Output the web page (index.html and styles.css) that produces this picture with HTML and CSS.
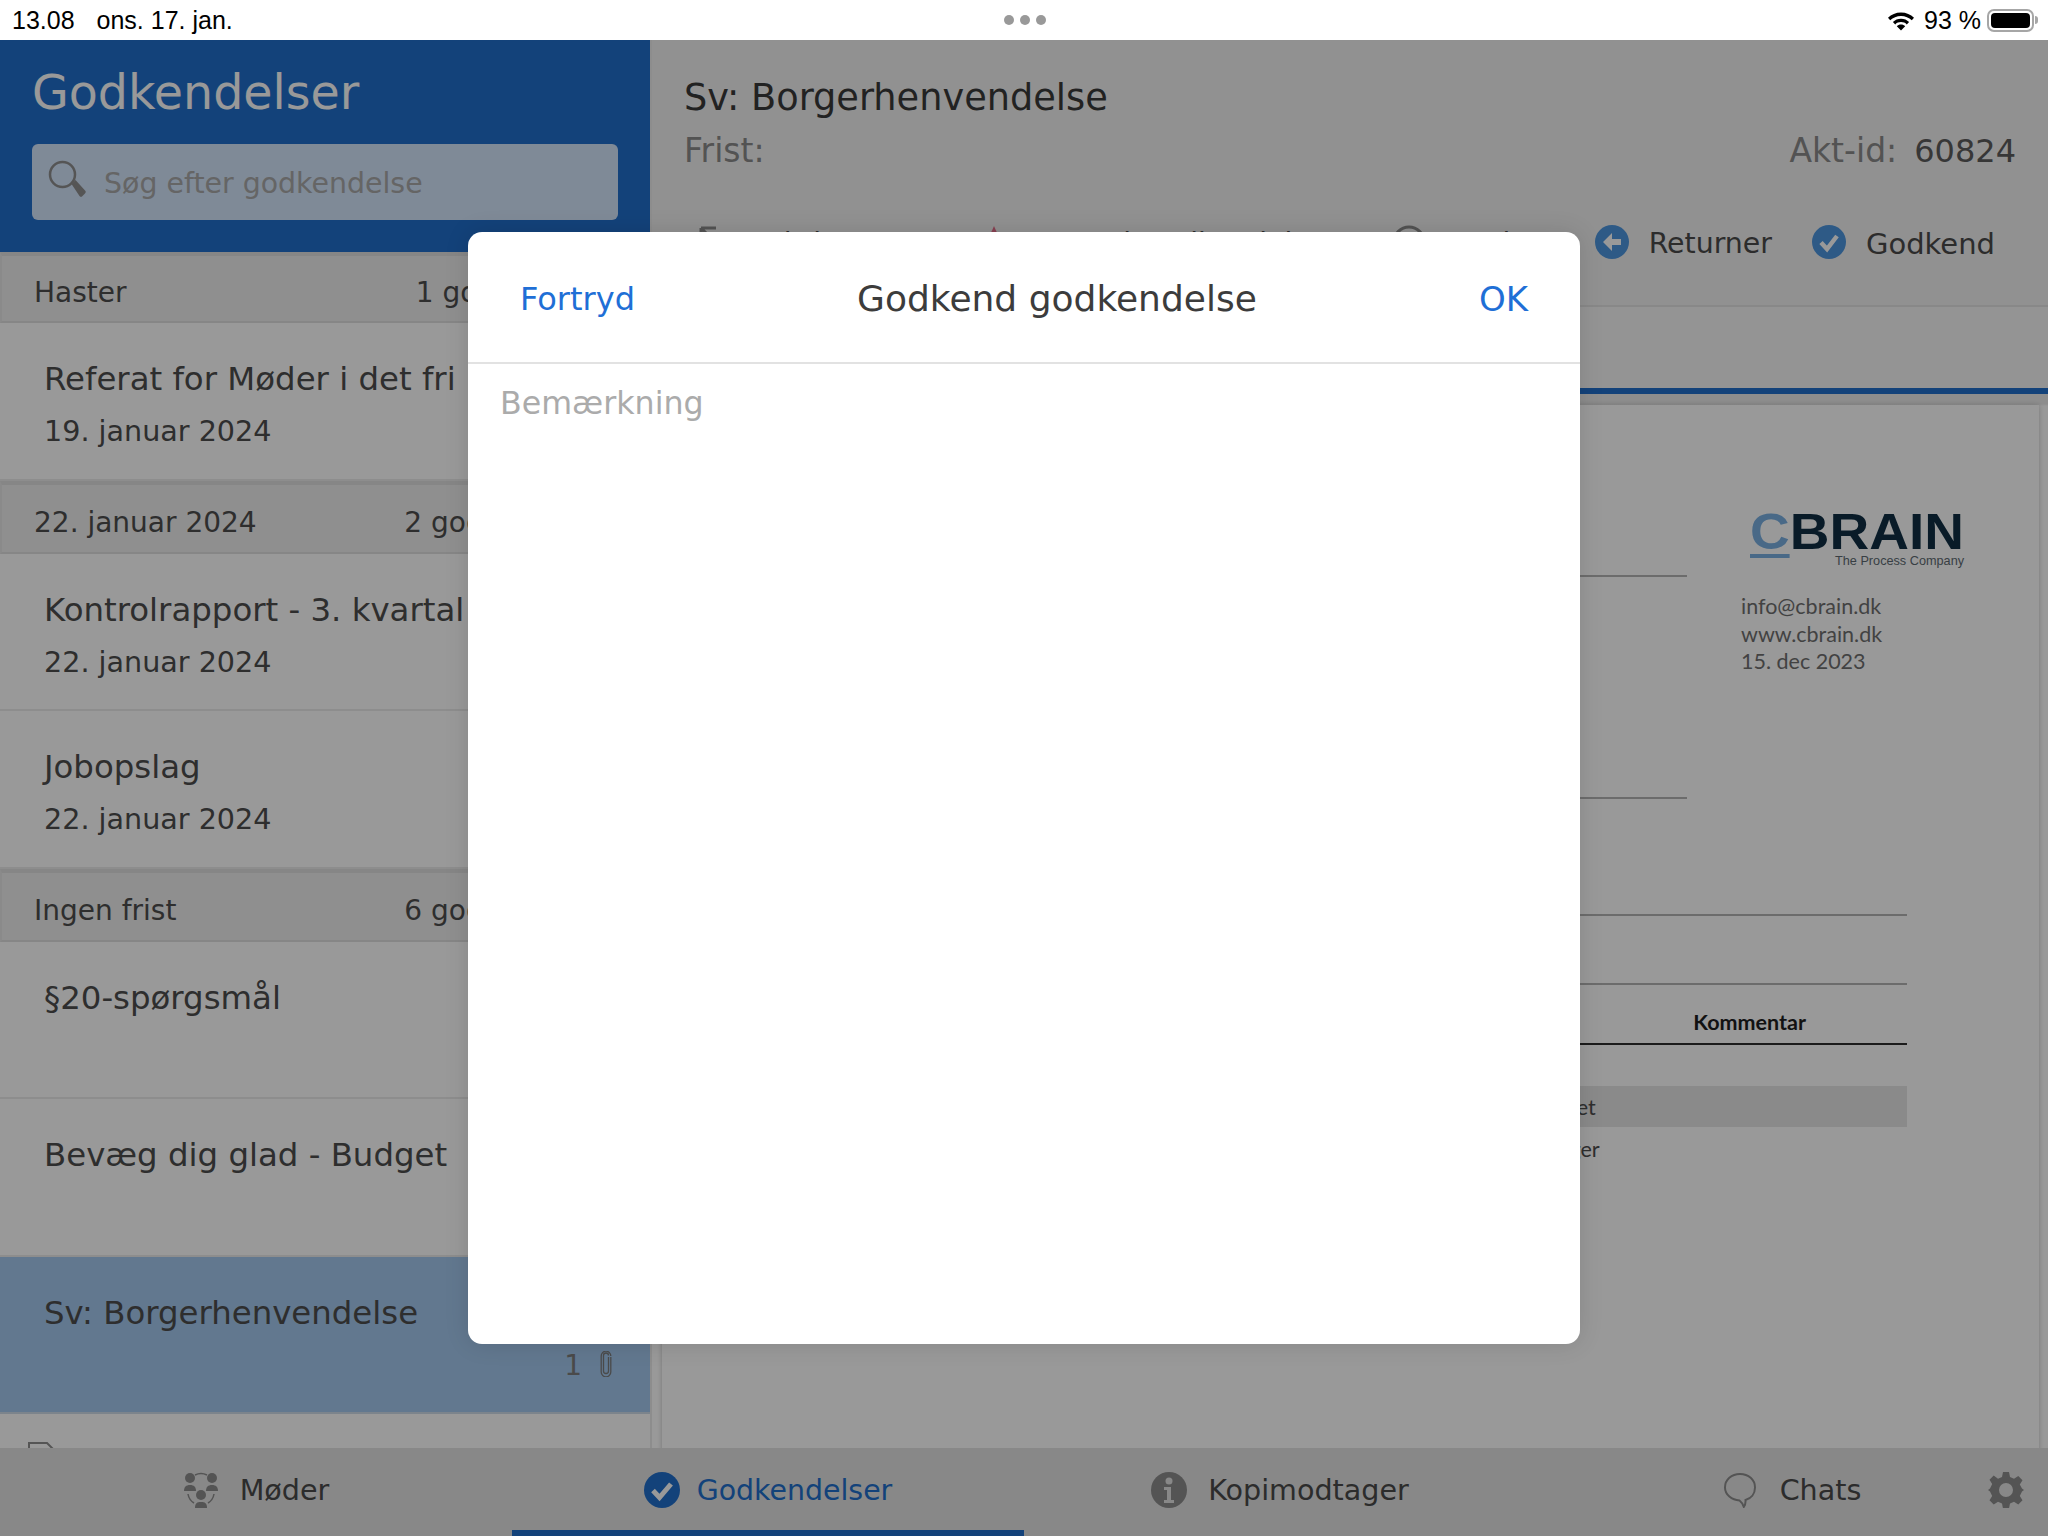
FILE: index.html
```html
<!DOCTYPE html>
<html lang="da">
<head>
<meta charset="utf-8">
<title>Godkendelser</title>
<link rel="stylesheet" href="styles.css">
</head>
<body>
<div class="app">
  <div class="status">
    <div class="status-left"><span>13.08</span><span>ons. 17. jan.</span></div>
    <div class="dots"><i></i><i></i><i></i></div>
    <div class="status-right">
      <svg class="wifi" viewBox="0 0 28 22"><path d="M14 3.500c5.200 0 9.700 2 13 5.300l-2.200 2.400C22 8.500 18.200 6.900 14 6.900S6 8.500 3.200 11.200L1 8.800C4.300 5.500 8.800 3.500 14 3.500z"/><path d="M14 9.700c3.200 0 6 1.200 8.100 3.300l-2.300 2.400c-1.500-1.500-3.500-2.300-5.800-2.300s-4.300.8-5.800 2.300L5.900 13c2.100-2.100 4.900-3.300 8.100-3.300z"/><path d="M14 15.500c1.700 0 3.100.6 4.200 1.700L14 21.500l-4.200-4.300c1.100-1.100 2.500-1.700 4.200-1.700z"/></svg>
      <span>93 %</span>
      <div class="battery"><b></b></div><div class="battery-tip"></div>
    </div>
  </div>
  <div class="main">
    <aside class="left">
      <header class="left-head">
        <h1>Godkendelser</h1>
        <div class="search">
          <svg class="search-icon" viewBox="0 0 38 38"><circle cx="14.500" cy="14.500" r="12.500" fill="none" stroke="currentColor" stroke-width="2.500"/><path d="M23.500 24l4-4 10 11a2.500 2.500 0 0 1-1 3l-2 2a2 2 0 0 1-3 0z" fill="currentColor"/></svg>
          <span>Søg efter godkendelse</span>
        </div>
      </header>
      <div class="list">
        <div class="section"><span>Haster</span><span>1 godkendelse</span></div>
        <div class="item"><div class="item-title">Referat for Møder i det fri</div><div class="item-date">19. januar 2024</div></div>
        <div class="section"><span>22. januar 2024</span><span>2 godkendelser</span></div>
        <div class="item"><div class="item-title">Kontrolrapport - 3. kvartal</div><div class="item-date">22. januar 2024</div></div>
        <div class="item"><div class="item-title">Jobopslag</div><div class="item-date">22. januar 2024</div></div>
        <div class="section"><span>Ingen frist</span><span>6 godkendelser</span></div>
        <div class="item"><div class="item-title">§20-spørgsmål</div></div>
        <div class="item"><div class="item-title">Bevæg dig glad - Budget</div></div>
        <div class="item selected">
          <div class="item-title">Sv: Borgerhenvendelse</div>
          <div class="item-meta"><span>1</span>
            <svg class="clip" viewBox="0 0 12 26"><path d="M8.500 6v14a2.500 2.500 0 0 1-5 0V4.500a2.500 2.500 0 0 1 5 0M10.800 6v15a4.800 4.800 0 0 1-9.600 0V5a4.800 4.800 0 0 1 9.600 0" fill="none" stroke="currentColor" stroke-width="1.300"/></svg>
          </div>
        </div>
        <div class="item partial">
          <svg class="doc-icon" viewBox="0 0 28 34"><path d="M1 33V1h18l8 8v24" fill="none" stroke="currentColor" stroke-width="2"/></svg>
        </div>
      </div>
    </aside>
    <section class="right">
      <header class="right-head">
        <h2>Sv: Borgerhenvendelse</h2>
        <div class="meta"><span>Frist:</span><span>Akt-id:<em>60824</em></span></div>
        <div class="toolbar">
          <div class="tool wide-1"><svg class="ti" viewBox="0 0 34 34"><path d="M3 3h15M3 3v15M3 3l26 26" fill="none" stroke="#8a8a8a" stroke-width="3"/></svg>Feltdata</div>
          <div class="tool wide-2"><svg class="ti" viewBox="0 0 34 34"><path d="M17 1l8 18H9z" fill="#e56c88"/></svg>Anmod/Godkendelser</div>
          <div class="tool wide-3"><svg class="ti" viewBox="0 0 34 34"><circle cx="17" cy="17" r="15" fill="none" stroke="#8a8a8a" stroke-width="3"/></svg>Vurder</div>
          <div class="tool"><svg class="ti" viewBox="0 0 34 34"><circle cx="17" cy="17" r="17" fill="#4d96df"/><path d="M17 8l-9 9 9 9v-6h9v-6h-9z" fill="#fff"/></svg>Returner</div>
          <div class="tool accept"><svg class="ti" viewBox="0 0 34 34"><circle cx="17" cy="17" r="17" fill="#4d96df"/><path d="M9 17.500l6 6.500 10-13" fill="none" stroke="#fff" stroke-width="4.500"/></svg>Godkend</div>
        </div>
      </header>
      <div class="tabstrip"></div>
      <div class="viewer">
        <div class="page">
          <div class="page-top">
            <div class="page-lines">
              <div class="rule"></div>
              <div class="rule second"></div>
            </div>
            <div class="page-brand">
              <div class="logo"><span class="logo-c">C</span><span class="logo-word">BRAIN</span></div>
              <div class="logo-tag">The Process Company</div>
              <div class="contact">info@cbrain.dk<br>www.cbrain.dk<br>15. dec 2023</div>
            </div>
          </div>
          <div class="page-table">
            <div class="rule full"></div>
            <div class="rule full gap"></div>
            <div class="col-head"><span>Kommentar</span></div>
            <div class="band"><span>Emnet</span></div>
            <div class="row-text"><span>Borger</span></div>
          </div>
        </div>
      </div>
    </section>
  </div>
  <nav class="tabs">
    <div class="tab">
      <svg class="tab-icon" viewBox="0 0 34 36"><g fill="#8c8c8c"><circle cx="6" cy="6" r="5"/><circle cx="28" cy="6" r="5"/><circle cx="17" cy="23" r="5"/><path d="M0 19c0-4 2-6 6-6s6 2 6 6zM22 19c0-4 2-6 6-6s6 2 6 6zM11 36c0-5 2-6 6-6s6 1 6 6z"/></g><path d="M11 3q6-3 12 0M4 22q1 6 6 9M30 22q-1 6-6 9" fill="none" stroke="#8c8c8c" stroke-width="1.500"/></svg>
      <span>Møder</span>
    </div>
    <div class="tab active">
      <svg class="tab-icon" viewBox="0 0 36 36"><circle cx="18" cy="18" r="18" fill="#216ecb"/><path d="M9 18.500l6.500 7L27 12" fill="none" stroke="#fff" stroke-width="5"/></svg>
      <span>Godkendelser</span>
    </div>
    <div class="tab">
      <svg class="tab-icon" viewBox="0 0 36 36"><circle cx="18" cy="18" r="18" fill="#8c8c8c"/><circle cx="18" cy="9" r="3.500" fill="#e3e3e3"/><path d="M13 15h7v13h3v3H13v-3h3V18h-3z" fill="#e3e3e3"/></svg>
      <span>Kopimodtager</span>
    </div>
    <div class="tab">
      <svg class="tab-icon" viewBox="0 0 36 36"><path d="M17 2c8.500 0 15 5.800 15 13.500 0 6.500-4 11-9.500 12.500.2 2.500-.2 5-1.700 7-.8-2.300-2-4.800-4.300-6.500C8.800 28 2 22.800 2 15.500 2 7.800 8.500 2 17 2z" fill="none" stroke="#8c8c8c" stroke-width="2"/></svg>
      <span>Chats</span>
    </div>
    <svg class="gear" viewBox="0 0 36 36"><path fill="#8c8c8c" fill-rule="evenodd" d="M15 0h6l1 5 4 1.700 4.300-2.700 4.200 4.200-2.700 4.300L34 16.500l2 1.500-2 1.500-2.200 4.500 2.700 4.300-4.200 4.200-4.300-2.700-4 1.700-1 5h-6l-1-5-4-1.700-4.300 2.700L1.500 28.300l2.700-4.300L2 19.500 0 18l2-1.500 2.200-4.500-2.700-4.300L5.700 3.500 10 6.700 14 5zM18 11a7 7 0 1 0 0 14 7 7 0 0 0 0-14z"/></svg>
  </nav>
  <div class="dim"></div>
  <div class="modal">
    <div class="modal-head">
      <span class="modal-btn">Fortryd</span>
      <span class="modal-title">Godkend godkendelse</span>
      <span class="modal-btn ok">OK</span>
    </div>
    <div class="modal-body">Bemærkning</div>
  </div>
</div>
</body>
</html>
```

FILE: styles.css
```css
* { box-sizing: border-box; }
html, body { margin: 0; padding: 0; }
body { width: 2048px; height: 1536px; overflow: hidden; font-family: "DejaVu Sans", sans-serif; background: #fff; color: #4a4a4a; }
h1, h2 { margin: 0; font-weight: 400; }
.app { position: relative; width: 2048px; height: 1536px; display: flex; flex-direction: column; }

/* status bar */
.status { height: 40px; flex: none; display: grid; grid-template-columns: 1fr auto 1fr; align-items: center; padding: 0 10px 0 12px; font-family: "Liberation Sans", sans-serif; font-size: 25px; color: #000; }
.status-left { display: flex; gap: 22px; }
.dots { display: flex; gap: 6px; }
.dots i { width: 10px; height: 10px; border-radius: 50%; background: #999; }
.status-right { display: flex; align-items: center; justify-content: flex-end; }
.wifi { width: 28px; height: 22px; margin-right: 9px; }
.battery { width: 47px; height: 23px; margin-left: 6px; border: 2px solid #a6a6a6; border-radius: 7px; padding: 2px; }
.battery b { display: block; width: 100%; height: 100%; border-radius: 4px; background: #000; }
.battery-tip { width: 3px; height: 8px; margin-left: 1px; border-radius: 0 3px 3px 0; background: #a6a6a6; }

/* layout */
.main { flex: 1; display: flex; min-height: 0; }
.left { width: 652px; flex: none; display: flex; flex-direction: column; background: #fff; border-right: 2px solid #ececec; }
.left-head { flex: none; height: 212px; padding: 25px 32px 0; background: #216ecb; }
.left-head h1 { font-size: 47.500px; line-height: 56px; color: #fff; }
.search { display: flex; align-items: center; gap: 18px; height: 76px; margin-top: 23px; padding: 2px 0 0 16px; border-radius: 6px; background: #d4e6fc; font-size: 28.400px; color: #a8a8a8; }
.search-icon { width: 38px; height: 38px; margin-top: -8px; color: #8e8e8e; }

/* list */
.list { flex: 1; overflow: hidden; min-height: 0; }
.section { height: 73px; display: flex; justify-content: space-between; align-items: center; padding: 8px 30px 0 32px; background: #eeeeee; border-top: 4px solid #e0e0e0; border-bottom: 2px solid #e0e0e0; border-left: 2px solid #e6e6e6; font-size: 28px; color: #4d4d4d; white-space: nowrap; }
.section:first-child { height: 71px; }
.item { height: 157.500px; display: flex; flex-direction: column; padding: 34px 44px 0; background: #fff; border-bottom: 2px solid #ececec; }
.item-title { font-size: 32.400px; line-height: 44px; color: #4d4d4d; white-space: nowrap; }
.item-date { margin-top: 10px; font-size: 28.600px; line-height: 40px; color: #4d4d4d; white-space: nowrap; }
.item.selected { background: #a3c8ee; border-bottom-color: #cfdde9; }
.item-meta { display: flex; align-items: center; justify-content: flex-end; gap: 18px; margin: 11px -6px 0 0; font-size: 28px; line-height: 40px; color: #7c7c7c; }
.clip { width: 12px; height: 26px; margin-top: -4px; }
.item.partial { padding: 28px 0 0 28px; }
.doc-icon { width: 28px; height: 34px; color: #8e8e8e; }

/* right */
.right { flex: 1; min-width: 0; display: flex; flex-direction: column; }
.right-head { flex: none; height: 267px; padding: 36px 32px 0 32px; background: #f2f2f2; border-bottom: 2px solid #e3e3e3; }
.right-head h2 { font-size: 36.700px; line-height: 44px; color: #3a3a3a; white-space: nowrap; }
.meta { display: flex; justify-content: space-between; margin-top: 11px; font-size: 33px; line-height: 40px; color: #8a8a8a; }
.meta em { margin-left: 17px; font-size: 32px; font-style: normal; color: #5c5c5c; }
.toolbar { display: flex; justify-content: flex-end; gap: 43px; height: 40px; margin: 53px 21px 0 0; font-size: 28.400px; line-height: 40px; color: #4a4a4a; white-space: nowrap; }
.tool { display: flex; align-items: center; gap: 20px; }
.tool.accept { margin-left: -3px; font-size: 29px; }
.ti { width: 34px; height: 34px; margin-top: -4px; }
.tool.wide-1 { width: 236px; }
.tool.wide-2 { width: 372px; }
.tool.wide-3 { width: 160px; }
.tabstrip { flex: none; height: 87px; background: #f7f7f7; border-bottom: 6px solid #216ecb; }
.viewer { flex: 1; min-height: 0; padding: 11px 9px 0 9px; overflow: hidden; background: linear-gradient(#ececec, #ececec 10px, #ffffff 12px); border-left: 1px solid #fff; }
.page { height: 1100px; background: #fff; box-shadow: 0 0 5px rgba(0,0,0,.22); padding-top: 109px; font-family: "Lato", sans-serif; color: #6f6f6f; }
.page-top { display: flex; height: 400px; }
.page-lines { width: 1025px; padding-top: 61px; }
.rule { height: 2px; background: #b4b4b4; }
.rule.second { margin-top: 220px; }
.page-brand { width: 240px; margin-left: 54px; }
.logo { display: flex; align-items: flex-start; height: 40px; margin-left: 9px; color: #0f2e44; font-family: "Liberation Sans", sans-serif; font-weight: 700; font-size: 50px; line-height: 36px; transform: scaleX(1.1); transform-origin: left top; }
.logo-c { height: 44px; color: #7ab0e2; border-bottom: 4px solid #7ab0e2; }
.logo-word { letter-spacing: 0; }
.logo-tag { margin-left: 94px; font-family: "Liberation Sans", sans-serif; font-size: 12.700px; line-height: 14px; white-space: nowrap; color: #5e6a72; }
.contact { margin-top: 25px; font-size: 21.500px; line-height: 27.500px; white-space: nowrap; }
.page-table { padding: 0 132px 0 0; }
.rule.full { width: 100%; }
.rule.gap { margin-top: 67px; }
.col-head { display: flex; justify-content: flex-end; height: 60px; padding: 24px 101px 0 0; border-bottom: 2px solid #2e2e2e; font-size: 21.500px; line-height: 26px; font-weight: 700; color: #1e1e1e; }
.band { display: flex; align-items: center; height: 41px; margin-top: 41px; padding-left: 873px; background: #e6e6e6; font-size: 21.500px; color: #4d4d4d; }
.row-text { margin-top: 9px; padding-left: 874px; font-size: 21.500px; line-height: 26px; color: #4d4d4d; }

/* tabs */
.tabs { position: relative; flex: none; height: 88px; display: grid; grid-template-columns: repeat(4, 512px); background: #e3e3e3; }
.tab { display: flex; align-items: center; justify-content: center; gap: 21px; padding-top: 2px; font-size: 28.600px; color: #4a4a4a; border-bottom: 6px solid transparent; }
.tab.active { gap: 17px; font-size: 28.400px; color: #216ecb; border-bottom-color: #216ecb; }
.tab-icon { width: 36px; height: 36px; }
.gear { position: absolute; right: 24px; top: 24px; width: 36px; height: 36px; }

/* modal overlay */
.dim { position: absolute; inset: 40px 0 0 0; background: rgba(0,0,0,.4); }
.modal { position: absolute; left: 468px; top: 232px; width: 1112px; height: 1112px; background: #fff; border-radius: 14px; box-shadow: 0 0 24px rgba(0,0,0,.12); }
.modal-head { display: flex; justify-content: space-between; align-items: center; height: 132px; padding: 3px 52px 0; border-bottom: 2px solid #e2e2e2; }
.modal-title { font-size: 36px; color: #3c3c3c; margin-top: -1px; }
.modal-btn { font-size: 32px; color: #1f6fd6; }
.modal-btn.ok { font-size: 34px; }
.modal-body { padding: 17px 32px; font-size: 31.700px; line-height: 44px; color: #ababab; }
```
